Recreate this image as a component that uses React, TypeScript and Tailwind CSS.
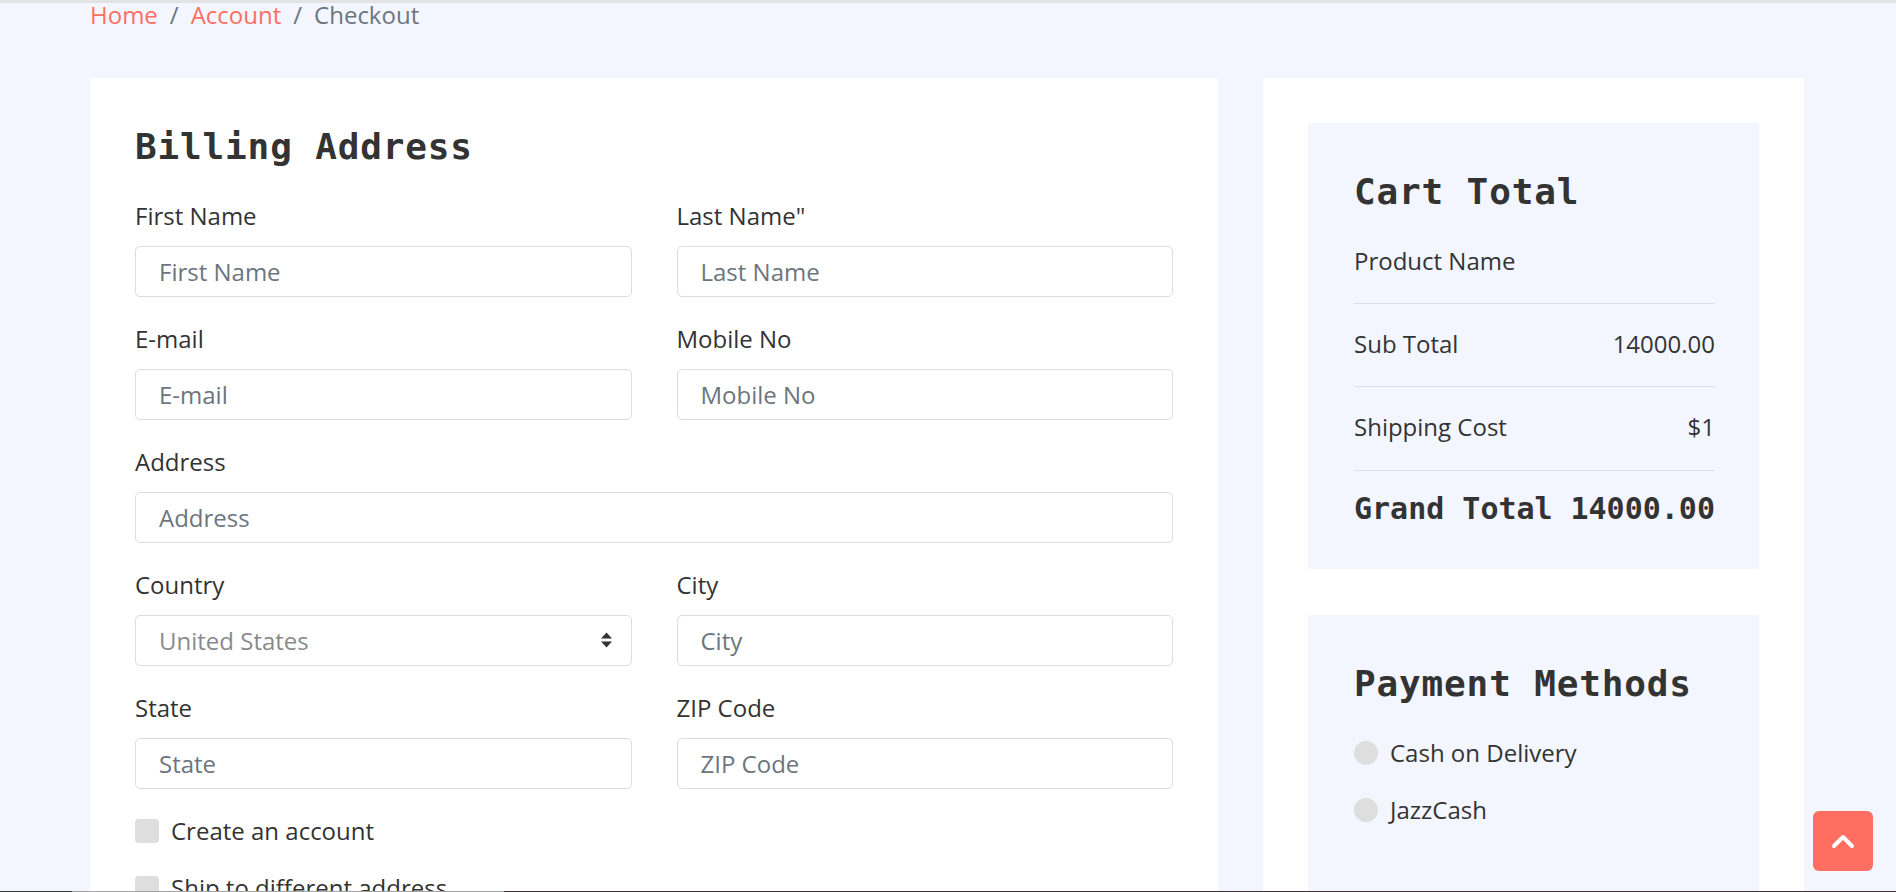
import React from "react";

const field =
  "w-full h-[51px] px-[23px] bg-white border border-[#dcdcdc] rounded-[5px] text-[24px] leading-[36px] text-[#333] placeholder:text-[#6c757d] outline-none font-['Open_Sans',sans-serif]";

const heading =
  "font-['DejaVu_Sans_Mono',monospace] font-bold text-[36px] leading-[43px] tracking-[0.85px]";

const Field: React.FC<{ label: string; placeholder: string; full?: boolean }> = ({
  label,
  placeholder,
  full,
}) => (
  <div className={full ? "col-span-2 mb-[24px]" : "mb-[24px]"}>
    <label className="block text-[24px] leading-[36px] mb-[12px]">{label}</label>
    <input type="text" placeholder={placeholder} className={field} />
  </div>
);

const Check: React.FC<{ label: string }> = ({ label }) => (
  <div className="flex items-center mb-[21px] h-[36px]">
    <span className="w-[24px] h-[24px] rounded-[4px] bg-[#dedede] mr-[12px]" />
    <span className="text-[24px] leading-[36px]">{label}</span>
  </div>
);

const Radio: React.FC<{ label: string }> = ({ label }) => (
  <div className="flex items-center mb-[21px] h-[36px]">
    <span className="w-[24px] h-[24px] rounded-full bg-[#dedede] mr-[12px]" />
    <span className="text-[24px] leading-[36px]">{label}</span>
  </div>
);

const Row: React.FC<{ label: string; value: string; last?: boolean }> = ({ label, value, last }) => (
  <div
    className={
      "flex justify-between pt-[22px] border-b border-[#dcdfe6] " + (last ? "pb-[25px]" : "pb-[24px]")
    }
  >
    <span className="text-[24px] leading-[36px]">{label}</span>
    <span className="text-[24px] leading-[36px]">{value}</span>
  </div>
);

export default function App() {
  return (
    <div className="min-h-screen bg-[#f3f6ff] text-[#333] font-['Open_Sans',sans-serif]">
      {/* top edge line */}
      <div className="fixed top-0 left-0 right-0 h-[3px] bg-[#e3e3e3] z-20" />

      <div className="pl-[90px] pr-[92px]">
        {/* breadcrumb */}
        <nav className="mt-[-3px] mb-[45px] flex text-[24px] leading-[36px]">
          <a className="text-[#ff6f61]">Home</a>
          <span className="px-[12px] text-[#6c757d]">/</span>
          <a className="text-[#ff6f61]">Account</a>
          <span className="px-[12px] text-[#6c757d]">/</span>
          <span className="text-[#6c757d]">Checkout</span>
        </nav>

        <div className="flex gap-[45px] items-start">
          {/* billing */}
          <div className="w-[1128px] bg-white px-[45px] pt-[47px] pb-[60px]">
            <h4 className={heading + " mb-[30px]"}>Billing Address</h4>
            <div className="grid grid-cols-2 gap-x-[45px]">
              <Field label="First Name" placeholder="First Name" />
              <Field label={'Last Name"'} placeholder="Last Name" />
              <Field label="E-mail" placeholder="E-mail" />
              <Field label="Mobile No" placeholder="Mobile No" />
              <Field label="Address" placeholder="Address" full />
              <div className="mb-[24px]">
                <label className="block text-[24px] leading-[36px] mb-[12px]">Country</label>
                <div className="relative">
                  <select
                    defaultValue="United States"
                    className="w-full h-[51px] px-[23px] bg-white border border-[#dcdcdc] rounded-[5px] text-[24px] leading-[36px] text-[#8a8a8a] outline-none appearance-none font-['Open_Sans',sans-serif]"
                  >
                    <option>United States</option>
                    <option>Pakistan</option>
                    <option>United Kingdom</option>
                  </select>
                  <svg
                    className="absolute right-[19px] top-[17px] pointer-events-none"
                    width="13"
                    height="16"
                    viewBox="0 0 13 16"
                  >
                    <path d="M6.5 0.5 L12 6.5 H1 Z" fill="#333" />
                    <path d="M6.5 15.5 L12 9.5 H1 Z" fill="#333" />
                  </svg>
                </div>
              </div>
              <Field label="City" placeholder="City" />
              <Field label="State" placeholder="State" />
              <Field label="ZIP Code" placeholder="ZIP Code" />
            </div>
            <Check label="Create an account" />
            <Check label="Ship to different address" />
          </div>

          {/* totals */}
          <div className="flex-1 bg-white p-[45px]">
            <div className="bg-[#f3f6ff] pl-[46px] pr-[44px] pt-[47px] pb-[42px] mb-[46px]">
              <h4 className={heading + " mb-[30px]"}>Cart Total</h4>
              <div className="pb-[24px] border-b border-[#dcdfe6]">
                <span className="text-[24px] leading-[36px]">Product Name</span>
              </div>
              <Row label="Sub Total" value="14000.00" />
              <Row label="Shipping Cost" value="$1" last />
              <div className="flex justify-between pt-[20px] font-['DejaVu_Sans_Mono',monospace] font-bold text-[30px] leading-[36px]">
                <span>Grand Total</span>
                <span>14000.00</span>
              </div>
            </div>

            <div className="bg-[#f3f6ff] pl-[46px] pr-[44px] pt-[47px] pb-[80px]">
              <h4 className={heading + " mb-[30px]"}>Payment Methods</h4>
              <Radio label="Cash on Delivery" />
              <Radio label="JazzCash" />
            </div>
          </div>
        </div>
      </div>

      {/* back to top */}
      <a className="fixed right-[23px] bottom-[21px] w-[60px] h-[60px] rounded-[6px] bg-[#ff6f61] flex items-center justify-center z-20">
        <svg width="24" height="16" viewBox="0 0 24 16" fill="none">
          <polyline
            points="3,13 12,4 21,13"
            stroke="#fff"
            strokeWidth="4"
            strokeLinecap="round"
            strokeLinejoin="round"
          />
        </svg>
      </a>

      {/* bottom edge line */}
      <div className="fixed bottom-0 left-0 right-0 h-px flex z-20">
        <div className="w-[72px] bg-[#333]" />
        <div className="w-[432px] bg-[#a3a3a3]" />
        <div className="flex-1 bg-[#3a2f2f]" />
      </div>
    </div>
  );
}
